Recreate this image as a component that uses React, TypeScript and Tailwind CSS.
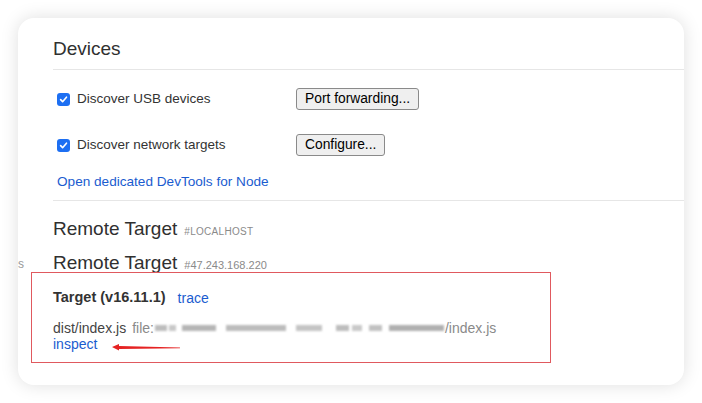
import React from 'react';

const font = { fontFamily: '"Liberation Sans", Arial, sans-serif' };

function CheckBox() {
  return (
    <span className="w-[13px] h-[13px] rounded-[3px] bg-[#1d6ff2] flex items-center justify-center shrink-0">
      <svg width="9" height="9" viewBox="0 0 10 10" fill="none">
        <path d="M1.8 5.2l2.2 2.2 4.3-5" stroke="white" strokeWidth={1.8} strokeLinecap="round" strokeLinejoin="round" />
      </svg>
    </span>
  );
}

function OptionRow({ label, button }: { label: string; button: string }) {
  return (
    <div className="flex items-center h-[22px] pl-[4px]">
      <div className="flex items-center gap-[7px] w-[239px]">
        <CheckBox />
        <span className="text-[13.5px] text-[#333]">{label}</span>
      </div>
      <button className="h-[22px] px-[8px] bg-[#efefef] border border-[#8a8a8a] rounded-[3px] text-[13.8px] text-black leading-none">
        {button}
      </button>
    </div>
  );
}

// pixelated blur in the path
const blurBlocks: [number, number, string][] = [
  [12, 2, '#bdbdbd'], [7, 6, '#c8c8c8'], [34, 10, '#b5b5b5'], [60, 10, '#bcbcbc'],
  [26, 14, '#c4c4c4'], [13, 3, '#bdbdbd'], [10, 7, '#c9c9c9'], [13, 7, '#c1c1c1'], [55, 1, '#b0b0b0'],
];

export default function App() {
  return (
    <div className="w-[702px] h-[403px] bg-white p-[18px] overflow-hidden" style={font}>
      <div className="relative h-[367px] bg-white rounded-[16px] shadow-[0_0_18px_rgba(0,0,0,0.13)] flex">
        <div className="w-[35px] shrink-0 pt-[233px]">
          <span className="text-[12px] text-[#999] leading-none">s</span>
        </div>

        <div className="flex-1 pt-[20px]">
          <h2 className="text-[19px] leading-[22px] text-[#303030]">Devices</h2>
          <div className="mt-[9px] border-b border-[#e6e6e6]" />

          <div className="mt-[18px] flex flex-col gap-[24px]">
            <OptionRow label="Discover USB devices" button="Port forwarding..." />
            <OptionRow label="Discover network targets" button="Configure..." />
          </div>

          <div className="mt-[18px] pl-[4px] h-[16px] leading-[16px] text-[13.6px] text-[#1a5ccf]">
            Open dedicated DevTools for Node
          </div>
          <div className="mt-[10px] border-b border-[#e6e6e6]" />

          <div className="mt-[14px] h-[24px] flex items-baseline gap-[7px]">
            <span className="text-[19px] text-[#303030]">Remote Target</span>
            <span className="text-[10px] text-[#8a8a8a] tracking-[0.3px]">#LOCALHOST</span>
          </div>
          <div className="mt-[10px] h-[24px] flex items-baseline gap-[7px]">
            <span className="text-[19px] text-[#303030]">Remote Target</span>
            <span className="text-[11px] text-[#8a8a8a]">#47.243.168.220</span>
          </div>

          <div className="mt-[17px] h-[16px] flex items-center gap-[12px]">
            <span className="text-[14.5px] font-bold text-[#333]">Target (v16.11.1)</span>
            <span className="text-[14px] text-[#1a5ccf]">trace</span>
          </div>

          <div className="mt-[14px] h-[16px] flex items-center text-[14px]">
            <span className="text-[#444]">dist/index.js</span>
            <span className="ml-[6px] text-[#8a8a8a]">file:</span>
            <span className="flex items-center blur-[0.8px] ml-[1px]">
              {blurBlocks.map(([w, gap, c], i) => (
                <span key={i} className="h-[6px]" style={{ width: w, marginRight: gap, background: c }} />
              ))}
            </span>
            <span className="text-[#8a8a8a]">/index.js</span>
          </div>
          <div className="h-[16px] leading-[16px] text-[14px] text-[#1a5ccf]">inspect</div>
        </div>

        {/* annotation */}
        <div className="absolute left-[13px] top-[254px] w-[520px] h-[91px] border-[1.5px] border-[#e0595e] pointer-events-none" />
        <svg className="absolute left-[94px] top-[325px]" width="70" height="8" viewBox="0 0 70 8">
          <polygon points="0,4 7,1 7,3 68,4.6 68,5.2 7,6 7,7.5" fill="#e52222" />
        </svg>
      </div>
    </div>
  );
}
